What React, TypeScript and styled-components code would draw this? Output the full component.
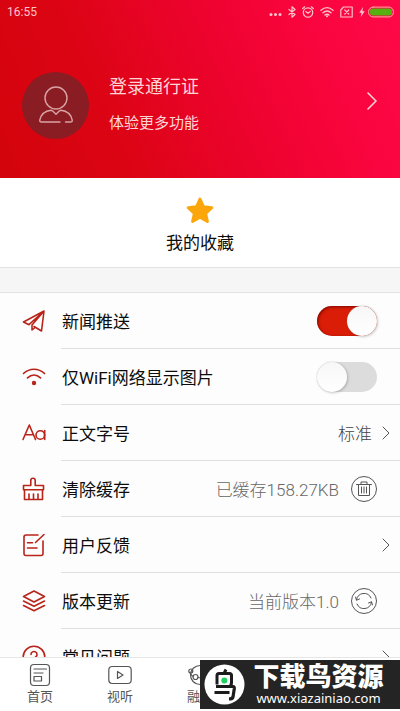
import React, { useState } from "react";
import styled, { createGlobalStyle, css } from "styled-components";

const GlobalStyle = createGlobalStyle`
  * { box-sizing: border-box; }
  body {
    margin: 0;
    background: #fdfdfd;
    color: #0c0c0c;
    font-family: Roboto, "Noto Sans CJK SC", sans-serif;
  }
  button, input { font: inherit; color: inherit; margin: 0; }
  svg { display: block; flex: none; }
`;

const plainButton = css`
  border: 0;
  padding: 0;
  background: none;
  text-align: left;
  cursor: pointer;
`;

const Screen = styled.div`
  position: relative;
  display: flex;
  flex-direction: column;
  height: 100vh;
  overflow: hidden;
`;

const Scroller = styled.main`
  flex: 1;
  min-height: 0;
  overflow-y: auto;
  scrollbar-width: none;
`;

const Header = styled.header`
  background: linear-gradient(66deg, #d3040b 0%, #dc0414 28%, #ee032f 58%, #fb0540 82%, #ff0848 100%);
`;

const StatusBar = styled.div`
  display: flex;
  align-items: center;
  justify-content: space-between;
  height: 24px;
  padding: 0 6px 0 7px;
  color: #ffc4cb;
  font-size: 12px;
`;

const StatusIcons = styled.div`
  display: flex;
  align-items: center;
  gap: 6px;
`;

const Power = styled.div`
  display: flex;
  align-items: center;
  gap: 3px;
`;

const Profile = styled.button`
  ${plainButton}
  display: flex;
  align-items: center;
  width: 100%;
  height: 154px;
  padding: 8px 23px 0 22px;
  color: #ffd5d6;
`;

const Avatar = styled.span`
  display: grid;
  place-items: center;
  width: 67px;
  height: 67px;
  border-radius: 50%;
  background: #8a1c24;
`;

const ProfileText = styled.span`
  display: flex;
  flex: 1;
  flex-direction: column;
  margin-left: 20px;
  line-height: 36px;
  font-size: 15px;
`;

const ProfileTitle = styled.span`
  font-size: 18px;
`;

const ProfileArrow = styled.span`
  padding-bottom: 8px;
`;

const Favorites = styled.button`
  ${plainButton}
  display: flex;
  flex-direction: column;
  align-items: center;
  gap: 1px;
  width: 100%;
  height: 89px;
  padding-top: 18px;
  background: #fff;
  font-size: 17px;
  line-height: 32px;
`;

const Band = styled.div`
  height: 26px;
  border: solid #e3e3e3;
  border-width: 1px 0;
  background: #f6f6f6;
`;

const List = styled.ul`
  margin: 0;
  padding: 0;
  list-style: none;
`;

const Row = styled.li`
  display: flex;
  align-items: stretch;
  padding-left: 22px;
`;

const RowIcon = styled.span`
  display: grid;
  place-items: center;
  width: 24px;
  margin-right: 15px;
  color: #b8241a;
`;

const bodyStyle = css<{ $end: number }>`
  display: flex;
  flex: 1;
  align-items: center;
  height: 56px;
  padding: 0 ${(p) => p.$end}px 0 1px;
  border-bottom: 1px solid #dedede;
  font-size: 17px;
`;

const RowBody = styled.div<{ $end: number }>`
  ${bodyStyle}
`;

const RowLink = styled.button<{ $end: number }>`
  ${plainButton}
  ${bodyStyle}
`;

const RowLabel = styled.label`
  flex: 1;
`;

const RowName = styled.span`
  flex: 1;
`;

const Value = styled.span<{ $strong?: boolean }>`
  margin-right: ${(p) => (p.$strong ? 10 : 12)}px;
  color: ${(p) => (p.$strong ? "#444" : "#666")};
  font-weight: 300;
`;

const RoundButton = styled.button`
  ${plainButton}
  display: grid;
  place-items: center;
  width: 26px;
  height: 26px;
  border: 1px solid #555;
  border-radius: 50%;
  color: #555;
`;

const Switch = styled.input`
  appearance: none;
  width: 60px;
  height: 30px;
  border-radius: 15px;
  background: #dcdcdc;
  cursor: pointer;

  &::before {
    content: "";
    display: block;
    width: 30px;
    height: 30px;
    border-radius: 50%;
    background: linear-gradient(#f7f7f7, #fff);
    box-shadow: 0 0 1px #999, 1px 1px 3px rgba(0, 0, 0, 0.2);
  }
  &:checked {
    background: #d91d06;
    box-shadow: inset 1px 1px 3px rgba(90, 0, 0, 0.7);
  }
  &:checked::before {
    margin-left: 30px;
  }
`;

const TabBar = styled.nav`
  display: grid;
  grid-template-columns: repeat(5, 1fr);
  height: 54px;
  border-top: 1px solid #e6e6e6;
  background: #fff;
`;

const Tab = styled.a`
  display: flex;
  flex-direction: column;
  align-items: center;
  padding-top: 5px;
  color: #555;
  font-size: 13px;
  line-height: 20px;
  text-decoration: none;
`;

const Watermark = styled.aside`
  position: absolute;
  right: 0;
  bottom: 2px;
  display: flex;
  align-items: center;
  width: 200px;
  height: 49px;
  padding: 0 8px 0 4px;
  background: #242424;
  color: #fff;
`;

const WatermarkText = styled.div`
  display: flex;
  flex: 1;
  flex-direction: column;
  align-items: center;
  padding-top: 2px;
  white-space: nowrap;
`;

const WatermarkName = styled.strong`
  font-size: 26px;
  font-weight: 900;
  line-height: 25px;
`;

const WatermarkSite = styled.span`
  font-family: "Noto Sans", sans-serif;
  font-size: 13px;
  line-height: 16px;
`;

type IconProps = { w: number; h: number; sw?: number; children: React.ReactNode };

const Icon = ({ w, h, sw = 1, children }: IconProps) => (
  <svg width={w} height={h} viewBox={`0 0 ${w} ${h}`} fill="none" stroke="currentColor" strokeWidth={sw} strokeLinecap="round" strokeLinejoin="round" aria-hidden="true">
    {children}
  </svg>
);

const Chevron = () => (
  <Icon w={8} h={14} sw={1}>
    <path d="M1 1l6 6-6 6" stroke="#555" />
  </Icon>
);

const SendIcon = () => (
  <Icon w={24} h={24} sw={1.6}>
    <path d="M22 2L1.500 13l5.500 2.700L22 2zM22 2l-2.500 20-7.500-4.500M22 2L10 16v5l3-2.500" />
  </Icon>
);

const WifiIcon = () => (
  <Icon w={24} h={24} sw={1.7}>
    <path d="M1.500 8.500C7.500 2.800 16.500 2.800 22.500 8.500M5.500 12.800c4-3.700 9-3.700 13 0" />
    <circle cx="12" cy="18" r="2.200" fill="currentColor" stroke="none" />
  </Icon>
);

const FontIcon = () => (
  <Icon w={24} h={24} sw={1.6}>
    <path d="M1 18.500L7.300 4 13.500 18.500M3.200 13.700h8.200" />
    <circle cx="18.300" cy="14" r="4.300" />
    <path d="M22.700 9.500v9" />
  </Icon>
);

const BrushIcon = () => (
  <Icon w={24} h={24} sw={1.6}>
    <path d="M1.500 8.500h7.300V3.500a2 2 0 0 1 4.400 0v5h8.300v4.300H1.500zM2.500 12.800v9.700h18v-9.700M7 17v5M11.500 17v5M16 17v5" />
  </Icon>
);

const FeedbackIcon = () => (
  <Icon w={24} h={24} sw={1.6}>
    <path d="M16 2H4a2 2 0 0 0-2 2v16.500a2 2 0 0 0 2 2h15a2 2 0 0 0 2-2V8M22 1.500L13.500 9.500M5.500 9.800h5M5.500 15h9.500" />
  </Icon>
);

const LayersIcon = () => (
  <Icon w={24} h={24} sw={1.6}>
    <path d="M12 2L22.500 7.500 12 13 1.500 7.500zM1.500 12L12 17.200l10.500-5.200M1.500 16.500L12 21.800l10.500-5.300" />
  </Icon>
);

const HelpIcon = () => (
  <Icon w={24} h={24} sw={1.6}>
    <circle cx="12" cy="12" r="10.800" />
    <path d="M9 9.500a3 3 0 1 1 4.500 2.600c-1 .6-1.500 1.200-1.500 2.400M12 17.500v.3" />
  </Icon>
);

const TrashIcon = () => (
  <Icon w={18} h={18}>
    <path d="M1.500 4.500h15M6 4.500V2h6v2.500M3.500 4.500v11h11v-11M6.500 7v6M9 7v6M11.500 7v6" />
  </Icon>
);

const RefreshIcon = () => (
  <Icon w={18} h={18}>
    <path d="M1.500 8A7.600 7.600 0 0 1 16 6M16.500 10A7.600 7.600 0 0 1 2 12M.5 5l1 3.200 3-1.200M17.500 13l-1-3.200-3 1.200" />
  </Icon>
);

const StatusGlyphs = () => (
  <StatusIcons>
    <Icon w={13} h={12}>
      <g fill="currentColor" stroke="none">
        <circle cx="2" cy="8.500" r="1.500" />
        <circle cx="6.500" cy="8.500" r="1.500" />
        <circle cx="11" cy="8.500" r="1.500" />
      </g>
    </Icon>
    <Icon w={8} h={12} sw={1.2}>
      <path d="M1 3.500l6 5-3 2.700V.8l3 2.700-6 5" />
    </Icon>
    <Icon w={12} h={12} sw={1.2}>
      <circle cx="6" cy="6.500" r="4.700" />
      <path d="M.7 2.500L2.700.8M11.300 2.500L9.300.8M3.800 5.500L6 7.300l2.200-1.800" />
    </Icon>
    <Icon w={14} h={12} sw={1.4}>
      <path d="M1 4.300c3.700-3.300 8.300-3.300 12 0M3 6.800c2.500-2.200 5.500-2.200 8 0M5 9c1.200-1 2.800-1 4 0" />
      <circle cx="7" cy="10.300" r="1" fill="currentColor" stroke="none" />
    </Icon>
    <Icon w={13} h={12} sw={1.2}>
      <path d="M3.500 1h8.700v10H.8V4zM4.800 4l4 4M8.800 4l-4 4" />
    </Icon>
    <Power>
      <Icon w={6} h={12}>
        <path d="M4 1L.3 6.800h2.200L1.800 11 5.700 5.200H3.400z" fill="currentColor" stroke="none" />
      </Icon>
      <Icon w={26} h={12}>
        <rect x=".6" y="1.100" width="24.800" height="9.800" rx="4.500" stroke="#ffb0a0" />
        <rect x="2" y="2.500" width="22" height="7" rx="3" fill="#55b010" stroke="none" />
      </Icon>
    </Power>
  </StatusIcons>
);

const WatermarkLogo = () => (
  <svg width="41" height="41" viewBox="0 0 41 41" fill="none" aria-hidden="true">
    <circle cx="20.500" cy="20.500" r="20" fill="#fff" />
    <path d="M13 20.500V11.500q0-2 2-2h10.500q2 0 2 2V19q0 2-2 2M20 9.500L22 5.500" stroke="#1c1c1c" strokeWidth="3" />
    <path d="M12 22.500h17q1.500 0 1.300 2L29 33q-.5 2-4 2M10.500 28.500h15" stroke="#1c1c1c" strokeWidth="3.200" />
    <circle cx="20.300" cy="16.500" r="3" fill="#20d060" />
  </svg>
);

export default function App() {
  const [push, setPush] = useState(true);
  const [wifiOnly, setWifiOnly] = useState(false);

  return (
    <>
      <GlobalStyle />
      <Screen>
        <Scroller>
          <Header>
            <StatusBar>
              <span>16:55</span>
              <StatusGlyphs />
            </StatusBar>
            <Profile type="button">
              <Avatar>
                <Icon w={36} h={40} sw={1.4}>
                  <g stroke="#d9a3a3">
                    <circle cx="18" cy="13" r="11" />
                    <path d="M22 37H3.500Q1.500 37 1.800 35C3 29.500 7 26 13 25.300q1.500 0 2.500 1.500l2.500 2.500 2.500-2.500q1-1.500 2.500-1.500C29 26 33 29.500 34.200 35q.3 2-1.700 2h-5" />
                  </g>
                </Icon>
              </Avatar>
              <ProfileText>
                <ProfileTitle>登录通行证</ProfileTitle>
                <span>体验更多功能</span>
              </ProfileText>
              <ProfileArrow>
                <Icon w={10} h={18} sw={1.6}>
                  <path d="M1 1l8 8-8 8" />
                </Icon>
              </ProfileArrow>
            </Profile>
          </Header>

          <Favorites type="button">
            <Icon w={30} h={30} sw={3}>
              <path d="M15 3l3.500 7.800 8.300.9-6.200 5.600 1.800 8.200L15 21.300l-7.400 4.200 1.800-8.200-6.200-5.600 8.300-.9z" fill="#fba70c" stroke="#fba70c" />
            </Icon>
            <span>我的收藏</span>
          </Favorites>
          <Band />

          <List>
            <Row>
              <RowIcon><SendIcon /></RowIcon>
              <RowBody $end={23}>
                <RowLabel htmlFor="push">新闻推送</RowLabel>
                <Switch id="push" type="checkbox" role="switch" checked={push} onChange={(e) => setPush(e.target.checked)} />
              </RowBody>
            </Row>
            <Row>
              <RowIcon><WifiIcon /></RowIcon>
              <RowBody $end={23}>
                <RowLabel htmlFor="wifi-only">仅WiFi网络显示图片</RowLabel>
                <Switch id="wifi-only" type="checkbox" role="switch" checked={wifiOnly} onChange={(e) => setWifiOnly(e.target.checked)} />
              </RowBody>
            </Row>
            <Row>
              <RowIcon><FontIcon /></RowIcon>
              <RowLink type="button" $end={10}>
                <RowName>正文字号</RowName>
                <Value $strong>标准</Value>
                <Chevron />
              </RowLink>
            </Row>
            <Row>
              <RowIcon><BrushIcon /></RowIcon>
              <RowBody $end={23}>
                <RowName>清除缓存</RowName>
                <Value>已缓存158.27KB</Value>
                <RoundButton type="button" aria-label="清除缓存"><TrashIcon /></RoundButton>
              </RowBody>
            </Row>
            <Row>
              <RowIcon><FeedbackIcon /></RowIcon>
              <RowLink type="button" $end={10}>
                <RowName>用户反馈</RowName>
                <Chevron />
              </RowLink>
            </Row>
            <Row>
              <RowIcon><LayersIcon /></RowIcon>
              <RowBody $end={23}>
                <RowName>版本更新</RowName>
                <Value>当前版本1.0</Value>
                <RoundButton type="button" aria-label="版本更新"><RefreshIcon /></RoundButton>
              </RowBody>
            </Row>
            <Row>
              <RowIcon><HelpIcon /></RowIcon>
              <RowLink type="button" $end={10}>
                <RowName>常见问题</RowName>
                <Chevron />
              </RowLink>
            </Row>
          </List>
        </Scroller>

        <TabBar>
          <Tab href="#home">
            <Icon w={24} h={24} sw={1.2}>
              <rect x="2.500" y="1.500" width="19" height="21" rx="3.500" />
              <path d="M6 6h12.500M6 10h9M6 13.500h7.500v4.500H6z" />
            </Icon>
            首页
          </Tab>
          <Tab href="#video">
            <Icon w={24} h={24} sw={1.2}>
              <rect x=".8" y="3.500" width="22.400" height="17" rx="3.500" />
              <path d="M9.500 8.500v7l5.500-3.500z" />
            </Icon>
            视听
          </Tab>
          <Tab href="#media">
            <Icon w={24} h={24} sw={1.2}>
              <circle cx="12" cy="12" r="9.500" />
              <circle cx="2.800" cy="8" r="2" />
              <circle cx="7.500" cy="14" r="2.500" />
              <path d="M2.500 10.500c1 2 2 3 3 3M10 14.500c3 .8 6 .3 9-1.500" />
            </Icon>
            融媒
          </Tab>
        </TabBar>

        <Watermark>
          <WatermarkLogo />
          <WatermarkText>
            <WatermarkName>下载鸟资源</WatermarkName>
            <WatermarkSite>www.xiazainiao.com</WatermarkSite>
          </WatermarkText>
        </Watermark>
      </Screen>
    </>
  );
}
